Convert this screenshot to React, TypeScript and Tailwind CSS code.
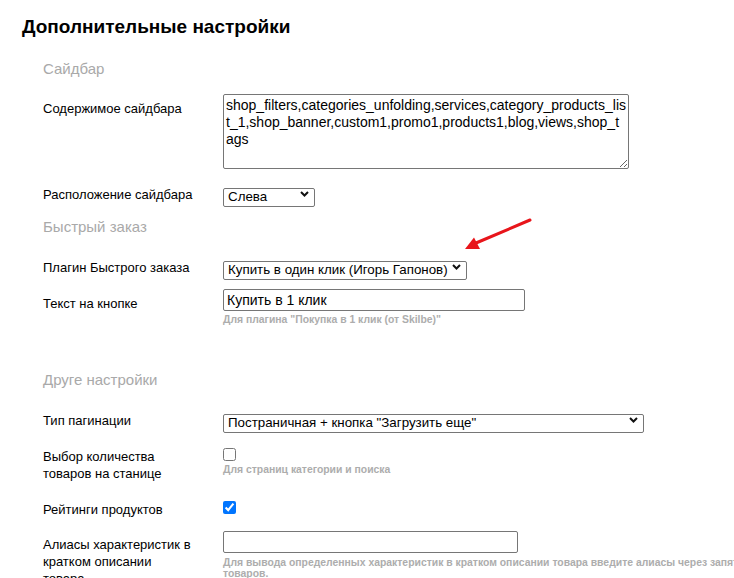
import React from 'react';

const sidebarContent =
    'shop_filters,categories_unfolding,services,category_products_list_1,shop_banner,custom1,promo1,products1,blog,views,shop_tags';

function SectionTitle({ children, className = '' }: { children: React.ReactNode; className?: string }) {
    return <div className={`text-[15px] leading-[17px] text-[#a9a9a9] ${className}`}>{children}</div>;
}

function Row({
    label,
    labelPad = '',
    className = '',
    children,
}: {
    label: React.ReactNode;
    labelPad?: string;
    className?: string;
    children: React.ReactNode;
}) {
    return (
        <div className={`flex ${className}`}>
            <div className={`w-[180px] shrink-0 whitespace-nowrap text-[13px] leading-[17px] text-black ${labelPad}`}>
                {label}
            </div>
            <div className="flex flex-col">{children}</div>
        </div>
    );
}

function Hint({ children, className = '' }: { children: React.ReactNode; className?: string }) {
    return (
        <div className={`whitespace-nowrap text-[10.4px] font-bold leading-[11px] text-[#adadad] ${className}`}>
            {children}
        </div>
    );
}

function Select({ value, options, width }: { value: string; options: string[]; width: string }) {
    return (
        <div className={`relative h-[19px] ${width}`}>
            <select
                defaultValue={value}
                className="h-full w-full appearance-none rounded-[2px] border border-[#767676] bg-white pb-[2px] pl-[4px] pr-[18px] text-[13.333px] leading-[15px] text-black outline-none"
            >
                {options.map((o) => (
                    <option key={o} value={o}>
                        {o}
                    </option>
                ))}
            </select>
            <svg
                className="pointer-events-none absolute right-[6px] top-[7px]"
                width="9"
                height="6"
                viewBox="0 0 9 6"
                fill="none"
            >
                <path d="M1 1l3.5 3.5L8 1" stroke="#111" strokeWidth="2" />
            </svg>
        </div>
    );
}

export default function App() {
    return (
        <div className="relative h-[578px] w-[734px] overflow-hidden bg-white font-['Liberation_Sans',Arial,sans-serif] text-black">
            <h1 className="ml-[22px] mt-[15px] text-[19px] font-bold leading-[24px]">Дополнительные настройки</h1>

            <div className="ml-[43px]">
                <SectionTitle className="mt-[21px]">Сайдбар</SectionTitle>

                <Row label="Содержимое сайдбара" labelPad="pt-[6px]" className="mt-[17px]">
                    <textarea
                        defaultValue={sidebarContent}
                        className="h-[75px] w-[406px] rounded-[2px] border border-[#767676] px-[2px] py-[2px] text-[14px] leading-[17px] text-black outline-none"
                    />
                </Row>

                <Row label="Расположение сайдбара" labelPad="pt-[2px]" className="mt-[15px]">
                    <Select value="Слева" options={['Слева', 'Справа']} width="w-[92px]" />
                </Row>

                <SectionTitle className="mt-[15px]">Быстрый заказ</SectionTitle>

                <Row label="Плагин Быстрого заказа" labelPad="pt-[2px]" className="mt-[22px]">
                    <Select
                        value="Купить в один клик (Игорь Гапонов)"
                        options={['Купить в один клик (Игорь Гапонов)', 'Покупка в 1 клик (от Skilbe)']}
                        width="w-[244px]"
                    />
                </Row>

                <Row label="Текст на кнопке" labelPad="pt-[6px]" className="mt-[13px]">
                    <input
                        type="text"
                        defaultValue="Купить в 1 клик"
                        className="h-[22px] w-[302px] rounded-[2px] border border-[#767676] px-[3px] text-[14px] text-black outline-none"
                    />
                    <Hint className="mt-[3px]">Для плагина "Покупка в 1 клик (от Skilbe)"</Hint>
                </Row>

                <SectionTitle className="mt-[46px]">Друге настройки</SectionTitle>

                <Row label="Тип пагинации" labelPad="pt-[2px]" className="mt-[22px]">
                    <Select
                        value='Постраничная + кнопка "Загрузить еще"'
                        options={['Постраничная', 'Постраничная + кнопка "Загрузить еще"', 'Бесконечная прокрутка']}
                        width="w-[421px]"
                    />
                </Row>

                <Row
                    label={
                        <>
                            Выбор количества
                            <br />
                            товаров на станице
                        </>
                    }
                    className="mt-[19px]"
                >
                    <input type="checkbox" className="m-0 h-[13px] w-[13px]" />
                    <Hint className="mt-[3px]">Для страниц категории и поиска</Hint>
                </Row>

                <Row label="Рейтинги продуктов" className="mt-[19px]">
                    <input type="checkbox" defaultChecked className="m-0 h-[13px] w-[13px]" />
                </Row>

                <Row
                    label={
                        <>
                            Алиасы характеристик в
                            <br />
                            кратком описании
                            <br />
                            товара
                        </>
                    }
                    labelPad="pt-[5px]"
                    className="mt-[13px]"
                >
                    <input
                        type="text"
                        className="h-[22px] w-[295px] rounded-[2px] border border-[#767676] px-[3px] text-[14px] text-black outline-none"
                    />
                    <Hint className="mt-[4px]">
                        Для вывода определенных характеристик в кратком описании товара введите алиасы через запятую. Работает
                        только в списках
                        <br />
                        товаров.
                    </Hint>
                </Row>
            </div>

            {/* red annotation arrow */}
            <svg className="pointer-events-none absolute left-0 top-0" width="734" height="578">
                <line x1="530" y1="220" x2="476" y2="243" stroke="#e8151b" strokeWidth="3" strokeLinecap="round" />
                <polygon points="465,249 474,237.5 480,249" fill="#e8151b" />
            </svg>
        </div>
    );
}
